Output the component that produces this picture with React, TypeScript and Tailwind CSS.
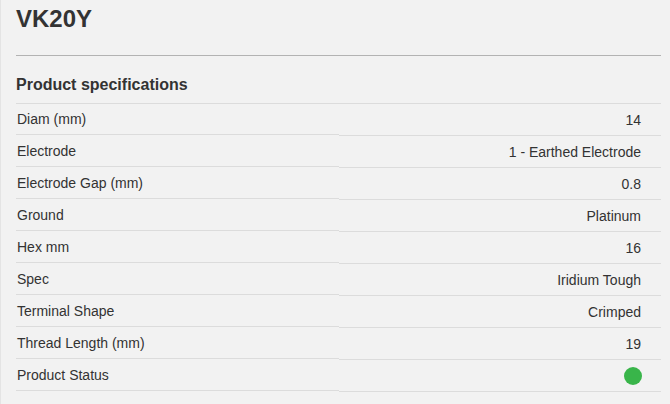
import { Fragment } from 'react';

const specs: { label: string; value: string }[] = [
  { label: 'Diam (mm)', value: '14' },
  { label: 'Electrode', value: '1 - Earthed Electrode' },
  { label: 'Electrode Gap (mm)', value: '0.8' },
  { label: 'Ground', value: 'Platinum' },
  { label: 'Hex mm', value: '16' },
  { label: 'Spec', value: 'Iridium Tough' },
  { label: 'Terminal Shape', value: 'Crimped' },
  { label: 'Thread Length (mm)', value: '19' },
  { label: 'Product Status', value: '' },
];

export default function App() {
  return (
    <div className="h-[404px] w-[670px] overflow-hidden border-l border-[#e4e4e4] bg-[#f2f2f2] pl-[15px] pr-[9px] font-['Liberation_Sans',Arial,sans-serif] text-[#333]">
      <h1 className="pt-[6px] text-[24px] font-bold leading-[26px]">VK20Y</h1>
      <hr className="mt-[23px] border-0 border-t border-[#b3b3b3]" />
      <h2 className="mt-[18px] mb-[7px] text-[16px] font-bold leading-[22px]">Product specifications</h2>
      <div className="grid grid-cols-2 border-t border-[#dcdcdc] text-[14px]">
        {specs.map((s) => (
          <Fragment key={s.label}>
            <div className="-mt-px mb-px flex h-[32px] items-center border-b border-[#dcdcdc] pt-[2px] pl-px">
              {s.label}
            </div>
            <div className="flex h-[32px] items-center justify-end border-b border-[#dcdcdc] pt-px pr-[20px]">
              {s.value ? (
                s.value
              ) : (
                <span className="mr-[-1px] block h-[18px] w-[18px] rounded-full bg-[#39b54a]" />
              )}
            </div>
          </Fragment>
        ))}
      </div>
    </div>
  );
}
